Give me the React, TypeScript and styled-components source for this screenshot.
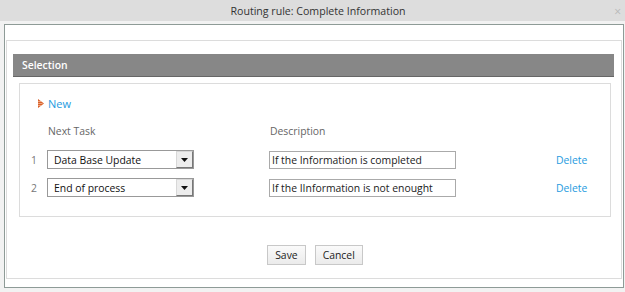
import styled, { createGlobalStyle } from "styled-components";

const GlobalStyle = createGlobalStyle`
  html, body {
    margin: 0;
    padding: 0;
    background: #f2f2f2;
    font-family: "Open Sans", "DejaVu Sans", sans-serif;
    font-size: 10.4px;
    color: #333;
  }
`;

const Dialog = styled.div`
  width: 625px;
  height: 292px;
  display: flex;
  flex-direction: column;
  background: #f2f2f2;
`;

const TitleBar = styled.div`
  position: relative;
  height: 21px;
  background: #dddddd;
  display: flex;
  align-items: center;
  justify-content: center;
  padding-left: 11px;
  font-size: 10.6px;
  color: #333;
  margin-bottom: 3px;
`;

const Close = styled.span`
  position: absolute;
  right: 4px;
  top: 3px;
  font-size: 12px;
  color: #b8b8b8;
`;

const Frame = styled.div`
  margin: 0 1px 0 4px;
  height: 264px;
  border: 1px solid #8e9b97;
  background: #fff;
  padding: 15px 1px 8px;
  box-sizing: border-box;
  display: flex;
`;

const Body = styled.div`
  flex: 1;
  border: 1px solid #dcdcdc;
  padding: 13px 7px 0 6px;
  display: flex;
  flex-direction: column;
`;

const SectionHeader = styled.div`
  height: 22px;
  background: #878787;
  border-bottom: 1px solid #666;
  color: #fff;
  font-weight: 600;
  display: flex;
  align-items: center;
  padding-left: 9px;
`;

const SectionBox = styled.div`
  margin: 6px 3px 0 6px;
  border: 1px solid #dcdcdc;
  height: 134px;
  box-sizing: border-box;
  padding-top: 12px;
`;

const NewLink = styled.a`
  display: flex;
  align-items: center;
  gap: 4px;
  margin-left: 18px;
  color: #1e9be0;
  font-size: 11px;
  height: 14px;
  cursor: pointer;
`;

const Grid = styled.div`
  display: grid;
  grid-template-columns: 27px 222px 287px auto;
  row-gap: 9px;
  margin-top: 14px;
  align-items: center;
`;

const HeadCell = styled.div`
  color: #666;
  padding-left: 1px;
  height: 14px;
  line-height: 14px;
  margin-bottom: 3px;
`;

const Num = styled.div`
  color: #777;
  padding-left: 11px;
`;

const SelectBox = styled.div`
  width: 147px;
  height: 19px;
  box-sizing: border-box;
  border: 1px solid #999;
  display: flex;
  align-items: center;
  background: #fff;
`;

const SelectText = styled.span`
  flex: 1;
  padding-left: 6px;
  color: #111;
`;

const Arrow = styled.span`
  width: 17px;
  height: 17px;
  box-sizing: border-box;
  border: 1px solid #777;
  border-top-color: #d8d8d8;
  border-left-color: #d8d8d8;
  background: #ededed;
  display: flex;
  align-items: center;
  justify-content: center;
`;

const TextInput = styled.div`
  width: 187px;
  height: 18px;
  box-sizing: border-box;
  border: 1px solid #aaa;
  display: flex;
  align-items: center;
  padding-left: 2px;
  color: #222;
`;

const DeleteLink = styled.a`
  color: #1e9be0;
  cursor: pointer;
`;

const Buttons = styled.div`
  display: flex;
  justify-content: center;
  gap: 9px;
  margin-top: 28px;
  padding-left: 3px;
`;

const Button = styled.button`
  height: 20px;
  padding: 0 7px;
  border: 1px solid #c8c8c8;
  background: linear-gradient(#fafafa, #ebebeb);
  font-family: "Open Sans", "DejaVu Sans", sans-serif;
  font-size: 10.4px;
  color: #222;
`;

const rows = [
  { task: "Data Base Update", desc: "If the Information is completed" },
  { task: "End of process", desc: "If the IInformation is not enought" },
];

const DownTriangle = () => (
  <svg width="7" height="4" viewBox="0 0 7 4">
    <path d="M0 0h7L3.5 4z" fill="#111" />
  </svg>
);

const NewIcon = () => (
  <svg width="6" height="9" viewBox="0 0 6 9">
    <path d="M0 0l6 4.5L0 9z" fill="#d9602a" />
    <path d="M0 2.5h3M0 4.5h4.5M0 6.5h3" stroke="#f4b896" strokeWidth="0.8" />
  </svg>
);

export default function App() {
  return (
    <>
      <GlobalStyle />
      <Dialog>
        <TitleBar>
          Routing rule: Complete Information
          <Close>×</Close>
        </TitleBar>
        <Frame>
          <Body>
            <SectionHeader>Selection</SectionHeader>
            <SectionBox>
              <NewLink>
                <NewIcon />
                New
              </NewLink>
              <Grid>
                <div />
                <HeadCell>Next Task</HeadCell>
                <HeadCell>Description</HeadCell>
                <div />
                {rows.map((r, i) => [
                  <Num key={"n" + i}>{i + 1}</Num>,
                  <SelectBox key={"s" + i}>
                    <SelectText>{r.task}</SelectText>
                    <Arrow>
                      <DownTriangle />
                    </Arrow>
                  </SelectBox>,
                  <TextInput key={"d" + i}>{r.desc}</TextInput>,
                  <DeleteLink key={"x" + i}>Delete</DeleteLink>,
                ])}
              </Grid>
            </SectionBox>
            <Buttons>
              <Button>Save</Button>
              <Button>Cancel</Button>
            </Buttons>
          </Body>
        </Frame>
      </Dialog>
    </>
  );
}
